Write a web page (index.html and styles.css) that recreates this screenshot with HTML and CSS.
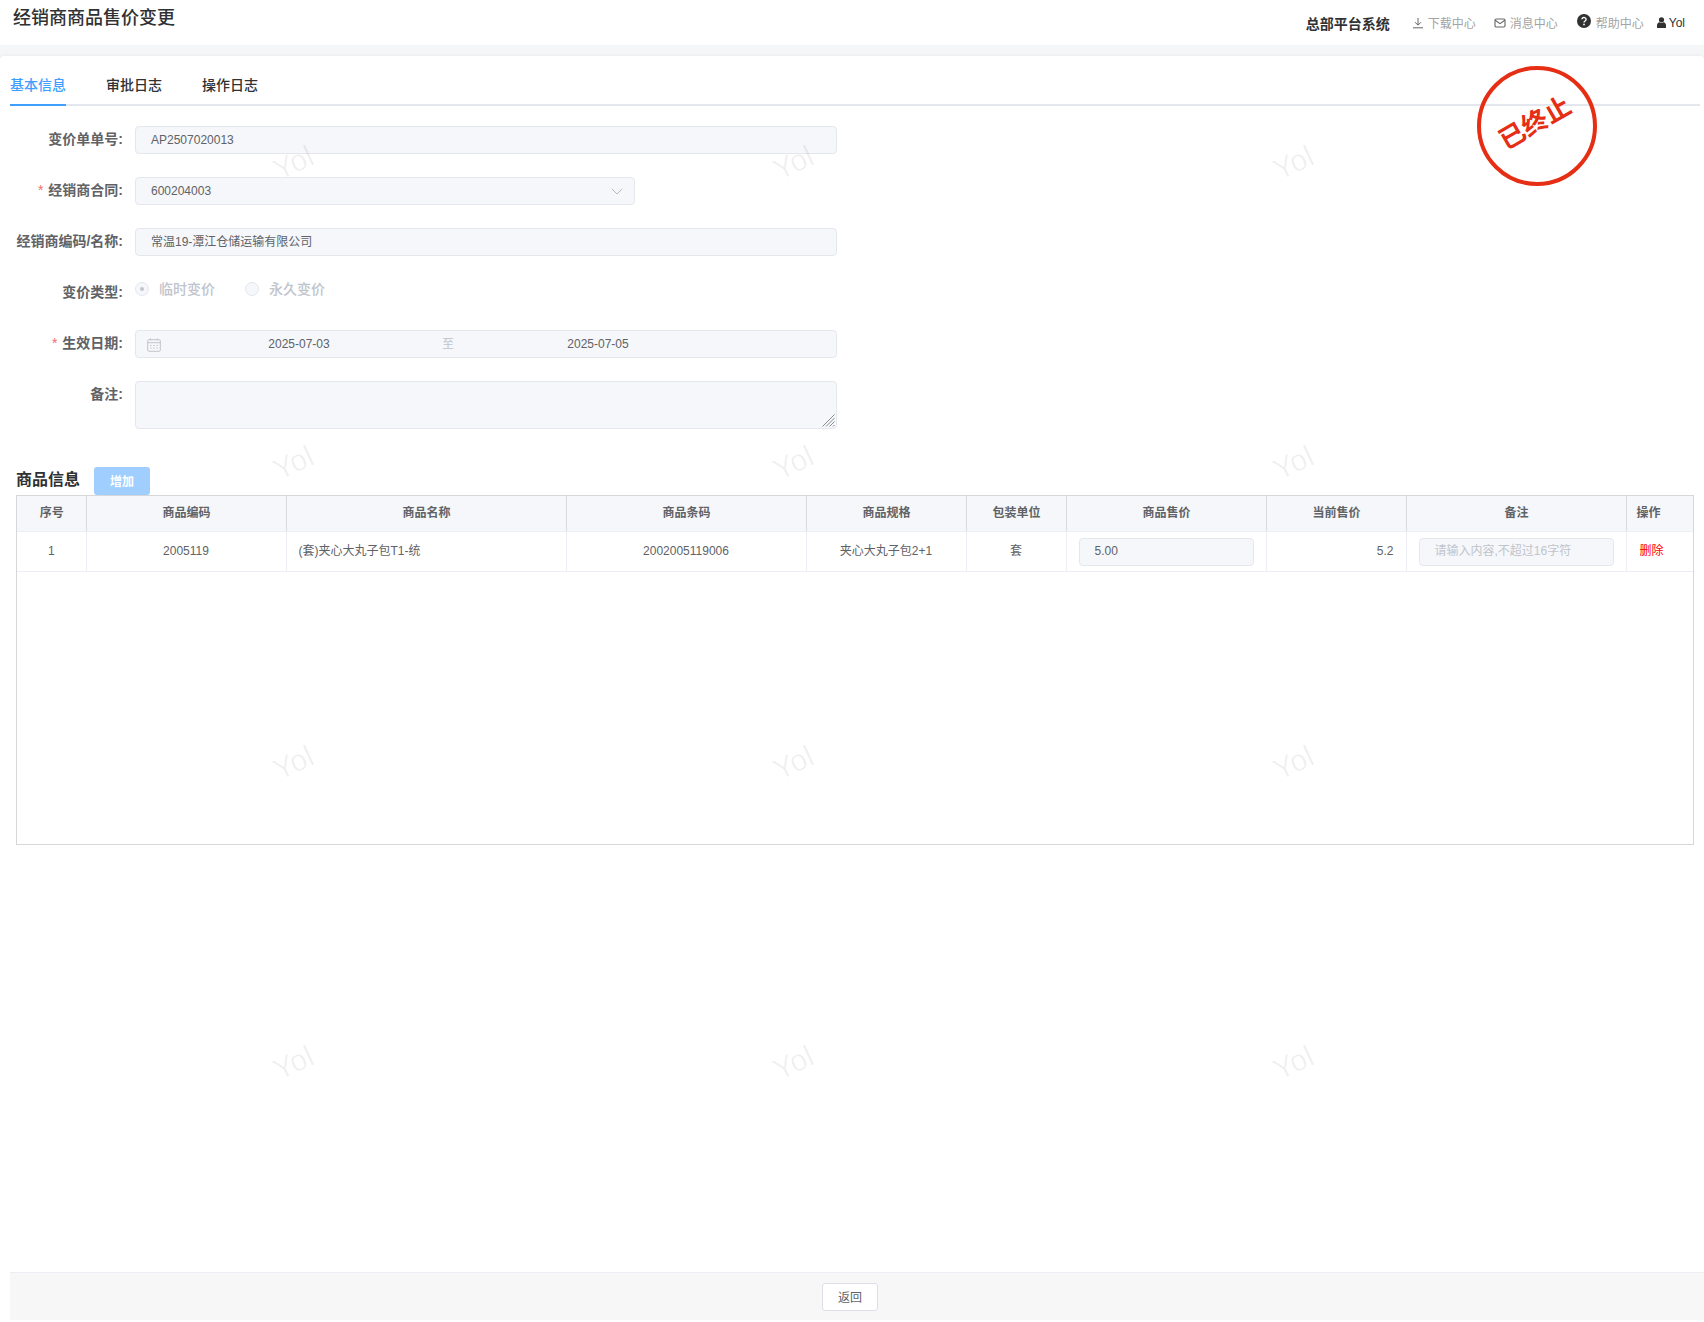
FILE: index.html
```html
<!DOCTYPE html>
<html lang="zh-CN">
<head>
<meta charset="utf-8">
<title>经销商商品售价变更</title>
<link rel="stylesheet" href="styles.css">
</head>
<body>
<div class="page">
  <header class="topbar">
    <h1 class="page-title">经销商商品售价变更</h1>
    <nav class="top-actions">
      <span class="system-name">总部平台系统</span>
      <a class="top-link link-download">
        <svg class="ic" width="12" height="12" viewBox="0 0 12 12" fill="none" stroke="#666" stroke-width="1"><path d="M6 1v7M3 5.2 6 8.2l3-3M1 10.8h10"/></svg>
        <span>下载中心</span>
      </a>
      <a class="top-link link-mail">
        <svg class="ic" width="12" height="12" viewBox="0 0 12 12" fill="none" stroke="#666" stroke-width="1.1"><rect x="1" y="2" width="10" height="8" rx="1.2"/><path d="M1.2 3.2 6 6.6l4.800-3.400"/></svg>
        <span>消息中心</span>
      </a>
      <a class="top-link link-help">
        <svg class="ic ic-help" width="14" height="14" viewBox="0 0 14 14"><circle cx="7" cy="7" r="7" fill="#303133"/><path d="M4.900 5.300a2.100 1.900 0 1 1 3.200 1.700c-.8.500-1.100.8-1.100 1.600" fill="none" stroke="#fff" stroke-width="1.400"/><rect x="6.200" y="9.700" width="1.600" height="1.600" fill="#fff"/></svg>
        <span>帮助中心</span>
      </a>
      <span class="user">
        <svg width="9" height="11" viewBox="0 0 9 11" fill="#303133"><circle cx="4.500" cy="2.800" r="2.600"/><path d="M0 11V8.200C0 6.500 1.300 5.500 2.500 5.300c1.200.8 2.800.8 4 0C7.700 5.500 9 6.500 9 8.200V11z"/></svg>
        <span>Yol</span>
      </span>
    </nav>
  </header>

  <main class="card">
    <div class="tabs">
      <div class="tab tab-active">基本信息</div>
      <div class="tab">审批日志</div>
      <div class="tab">操作日志</div>
    </div>

    <form class="form">
      <div class="form-row">
        <label class="form-label">变价单单号:</label>
        <div class="field field-wide">AP2507020013</div>
      </div>
      <div class="form-row">
        <label class="form-label"><i class="req">*</i>经销商合同:</label>
        <div class="field field-select">
          <span>600204003</span>
          <svg width="12" height="7" viewBox="0 0 12 7" fill="none" stroke="#b4b8bf" stroke-width="1"><path d="M.8.800 6 6l5.200-5.200"/></svg>
        </div>
      </div>
      <div class="form-row">
        <label class="form-label">经销商编码/名称:</label>
        <div class="field field-wide">常温19-潭江仓储运输有限公司</div>
      </div>
      <div class="form-row">
        <label class="form-label">变价类型:</label>
        <div class="radios">
          <span class="radio"><i class="radio-dot radio-on"></i>临时变价</span>
          <span class="radio"><i class="radio-dot"></i>永久变价</span>
        </div>
      </div>
      <div class="form-row">
        <label class="form-label"><i class="req">*</i>生效日期:</label>
        <div class="field field-wide field-date">
          <svg class="cal" width="14" height="14" viewBox="0 0 14 14" fill="none" stroke="#c0c4cc" stroke-width="1"><rect x=".7" y="1.700" width="12.600" height="11.600" rx="1"/><path d="M.7 4.700h12.600M3.500.5v2M10.500.5v2"/><path d="M3 7.500h1.500M6.200 7.500h1.500M9.500 7.500H11M3 10h1.500M6.200 10h1.500M9.500 10H11"/></svg>
          <span class="date-value date-start">2025-07-03</span>
          <span class="date-sep">至</span>
          <span class="date-value date-end">2025-07-05</span>
        </div>
      </div>
      <div class="form-row form-row-last">
        <label class="form-label">备注:</label>
        <div class="field field-wide field-area">
          <svg class="resizer" width="13" height="13" viewBox="0 0 13 13" fill="none" stroke="#7d7f84" stroke-width=".9"><path d="M.5 12.500 12.500.5M4 12.500l8.500-8.500M7.500 12.500l5-5M11 12.500l1.500-1.500"/></svg>
        </div>
      </div>
    </form>

    <div class="section-head">
      <h2 class="section-title">商品信息</h2>
      <button type="button" class="btn-add">增加</button>
    </div>

    <div class="table-box">
      <table class="grid">
        <colgroup>
          <col class="c-seq"><col class="c-code"><col class="c-name"><col class="c-bar"><col class="c-spec"><col class="c-unit"><col class="c-price"><col class="c-cur"><col class="c-note"><col class="c-op">
        </colgroup>
        <thead>
          <tr>
            <th>序号</th><th>商品编码</th><th>商品名称</th><th>商品条码</th><th>商品规格</th><th>包装单位</th><th>商品售价</th><th>当前售价</th><th>备注</th><th class="th-op">操作</th>
          </tr>
        </thead>
        <tbody>
          <tr>
            <td>1</td>
            <td>2005119</td>
            <td class="td-left">(套)夹心大丸子包T1-统</td>
            <td>2002005119006</td>
            <td>夹心大丸子包2+1</td>
            <td>套</td>
            <td class="td-field"><div class="field cell-field">5.00</div></td>
            <td class="td-right">5.2</td>
            <td class="td-field"><div class="field cell-field cell-placeholder">请输入内容,不超过16字符</div></td>
            <td class="td-op"><a class="op-del">删除</a></td>
          </tr>
        </tbody>
      </table>
    </div>

    <footer class="footer">
      <button type="button" class="btn-back">返回</button>
    </footer>

    <div class="stamp"><span class="stamp-text">已终止</span></div>
  </main>

  <div class="watermarks" aria-hidden="true">
    <span>Yol</span><span>Yol</span><span>Yol</span>
    <span>Yol</span><span>Yol</span><span>Yol</span>
    <span>Yol</span><span>Yol</span><span>Yol</span>
    <span>Yol</span><span>Yol</span><span>Yol</span>
  </div>
</div>
</body>
</html>
```
FILE: styles.css
```css
* { box-sizing: border-box; }
html, body { margin: 0; padding: 0; height: 100%; overflow: hidden; background: #fff; }
body {
  font-family: "Liberation Sans", "Noto Sans CJK SC", sans-serif;
  font-size: 12px;
  color: #606266;
}
.page {
  position: relative;
  width: 1704px;
  height: 1322px;
  display: flex;
  flex-direction: column;
  background: linear-gradient(#f5f6f7, #f1f2f4);
}

/* top bar */
.topbar {
  height: 45px;
  flex: none;
  background: #fff;
  display: flex;
  justify-content: space-between;
  padding: 0 19px 0 13px;
}
.page-title {
  margin: 6px 0 0;
  font-size: 18px;
  line-height: 25px;
  font-weight: 500;
  color: #303133;
}
.top-actions { display: flex; align-items: center; height: 45px; }
.system-name { font-size: 14px; font-weight: 600; color: #303133; margin-right: 22px; }
.top-link { display: flex; align-items: center; color: #a3a3a3; font-size: 12px; margin-right: 19px; }
.top-link .ic { margin-right: 4px; }
.link-download { margin-right: 18px; }
.link-help { margin-right: 13px; }
.link-help .ic-help { margin-right: 5px; margin-top: -3px; }
.user { display: flex; align-items: center; gap: 3px; color: #303133; font-size: 12px; }

/* card */
.card {
  position: relative;
  flex: 1;
  margin-top: 11px;
  background: #fff;
  border-radius: 4px 4px 0 0;
  box-shadow: 0 -1px 3px rgba(0, 0, 0, .04);
  display: flex;
  flex-direction: column;
  padding-bottom: 2px;
}
.tabs {
  display: flex;
  margin: 0 4px 0 10px;
  padding-top: 8px;
  border-bottom: 2px solid #e4e7ed;
  height: 50px;
}
.tab {
  height: 42px;
  line-height: 42px;
  font-size: 14px;
  font-weight: 500;
  color: #303133;
  margin-right: 40px;
}
.tab-active { color: #409eff; border-bottom: 2px solid #409eff; margin-bottom: -2px; height: 42px; }

/* form */
.form { padding-top: 20px; }
.form-row { display: flex; min-height: 28px; margin-bottom: 23px; }
.form-row-last { margin-bottom: 0; }
.form-label {
  width: 135px;
  padding-right: 12px;
  text-align: right;
  font-size: 14px;
  font-weight: 600;
  line-height: 26px;
  color: #606266;
  white-space: nowrap;
}
.req { font-style: normal; font-weight: 400; color: #f56c6c; margin-right: 5px; }
.field {
  height: 28px;
  line-height: 26px;
  padding: 0 15px;
  background: #f5f7fa;
  border: 1px solid #e4e7ed;
  border-radius: 4px;
  font-size: 12px;
  color: #606266;
}
.field-wide { width: 702px; }
.field-select { width: 500px; display: flex; align-items: center; justify-content: space-between; padding-right: 11px; }
.field-date { display: flex; align-items: center; padding: 0 0 0 11px; }
.cal { flex: none; margin-top: 2px; }
.date-value { text-align: center; flex: none; }
.date-start { width: 276px; }
.date-sep { width: 22px; text-align: center; color: #c0c4cc; flex: none; }
.date-end { width: 278px; }
.field-area { position: relative; height: 48px; }
.resizer { position: absolute; right: 1px; bottom: 1px; }
.radios { display: flex; height: 17px; align-items: center; color: #c0c4cc; font-size: 14px; font-weight: 500; }
.radio { display: flex; align-items: center; margin-right: 30px; }
.radio-dot {
  width: 14px; height: 14px;
  margin: 2px 10px 0 0;
  border-radius: 50%;
  border: 1px solid #e4e7ed;
  background: #f5f7fa;
  display: flex; align-items: center; justify-content: center;
}
.radio-on::after { content: ""; width: 4px; height: 4px; border-radius: 50%; background: #c0c4cc; }

/* section */
.section-head { display: flex; align-items: flex-start; height: 28px; margin: 38px 0 0 16px; }
.section-title { margin: 0 14px 0 0; font-size: 16px; line-height: 26px; font-weight: 600; color: #303133; }
.btn-add {
  width: 56px; height: 28px; padding: 0 0 2px;
  border: 0; border-radius: 3px;
  background: #a0cfff; color: #fff;
  font: 600 12px "Liberation Sans", "Noto Sans CJK SC", sans-serif;
}

/* table */
.table-box {
  margin: 0 10px 0 16px;
  height: 350px;
  border: 1px solid #d6d7d9;
  flex: none;
}
.grid { width: 100%; table-layout: fixed; border-collapse: collapse; font-size: 12px; }
.c-seq { width: 69px; } .c-code { width: 200px; } .c-name { width: 280px; } .c-bar { width: 240px; }
.c-spec { width: 160px; } .c-unit { width: 100px; } .c-price { width: 200px; } .c-cur { width: 140px; }
.c-note { width: 220px; } .c-op { width: auto; }
.grid th {
  height: 35px; padding: 0 0 1px 1px;
  line-height: 20px;
  background: #f5f7fa;
  font-weight: 600;
  color: #606266;
  text-align: center;
  border-left: 1px solid #d8dadd;
  border-bottom: 1px solid #ebeef5;
}
.grid td {
  height: 40px; padding: 0 12px;
  line-height: 20px;
  text-align: center;
  color: #606266;
  border-left: 1px solid #ebeef5;
  border-bottom: 1px solid #ebeef5;
}
.grid th:first-child, .grid td:first-child { border-left: 0; }
.grid .th-op { text-align: left; padding-left: 10px; }
.grid .td-left { text-align: left; }
.grid .td-right { text-align: right; }
.grid .td-field { text-align: left; }
.grid .td-op { text-align: left; padding-left: 13px; }
.cell-field { line-height: 25px; margin-top: 1px; }
.cell-placeholder { color: #c0c4cc; }
.op-del { color: #f00; }

/* footer */
.footer {
  margin: auto 0 0 10px;
  height: 48px;
  background: #f7f7f7;
  border-top: 1px solid #ebeef5;
  display: flex;
  align-items: center;
  justify-content: center;
  padding-right: 14px;
  flex: none;
}
.btn-back {
  width: 56px; height: 28px; padding: 0;
  background: #fff;
  border: 1px solid #dcdfe6;
  border-radius: 3px;
  color: #606266;
  font: 12px "Liberation Sans", "Noto Sans CJK SC", sans-serif;
}

/* stamp */
.stamp {
  position: absolute;
  left: 1477px; top: 10px;
  width: 120px; height: 120px;
  border: 4px solid #e62e14;
  border-radius: 50%;
  display: flex; align-items: center; justify-content: center;
}
.stamp-text {
  color: #e62e14;
  font-size: 26px;
  font-weight: 600;
  line-height: 1;
  transform: translate(-2px, -3px) rotate(-30deg);
  white-space: nowrap;
}

/* watermark */
.watermarks {
  position: absolute;
  left: 43px; top: 13px;
  display: grid;
  grid-template-columns: repeat(3, 500px);
  grid-auto-rows: 300px;
  place-items: center;
  pointer-events: none;
}
.watermarks span {
  font-size: 30px;
  color: rgba(0, 0, 0, .06);
  transform: rotate(-25deg);
}
```
